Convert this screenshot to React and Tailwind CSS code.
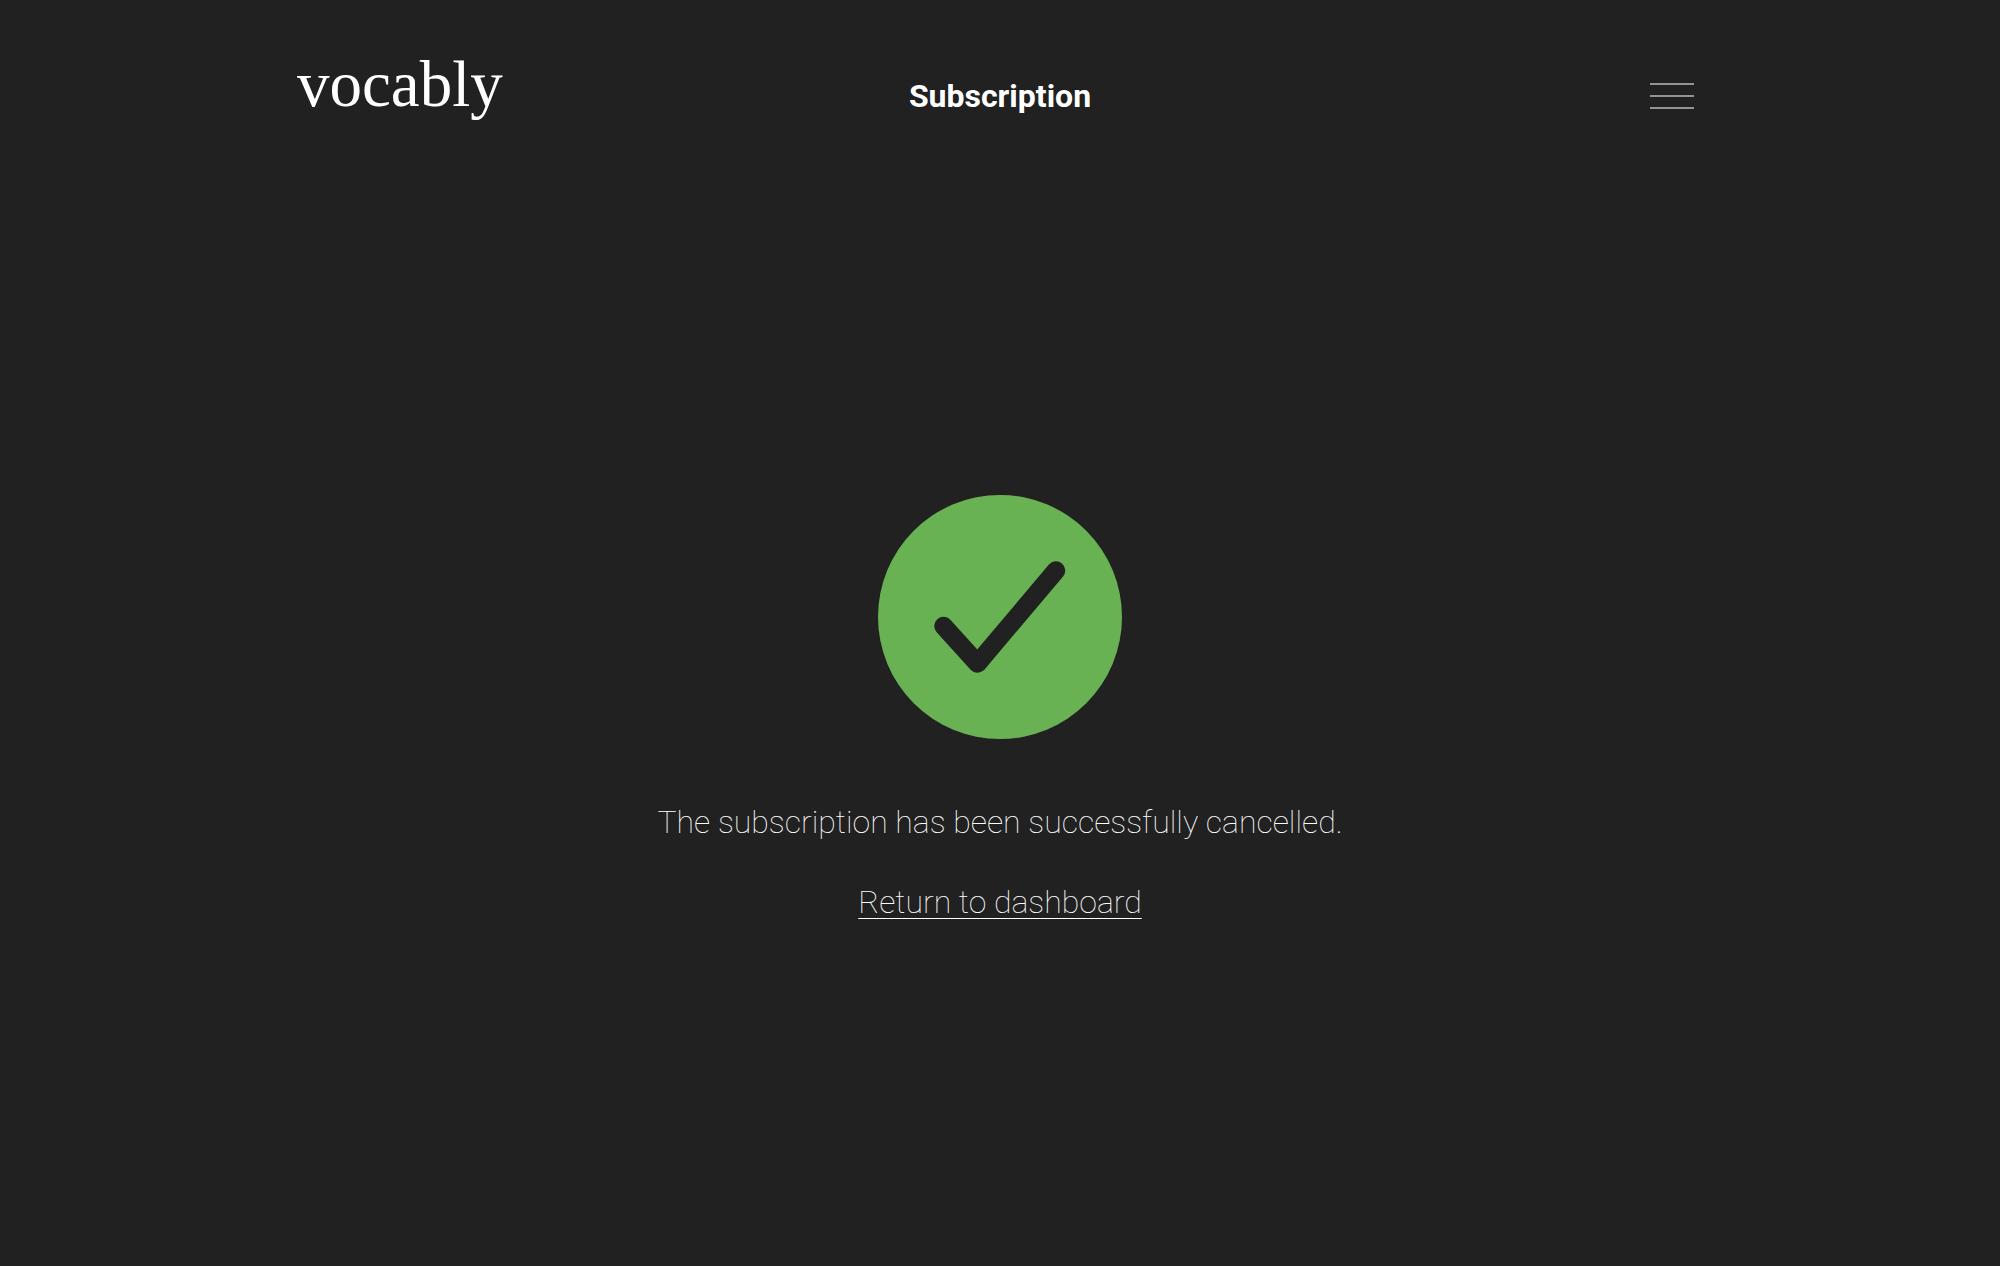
export default function App() {
  return (
    <div className="flex min-h-screen flex-col bg-[#212121] text-white font-['Roboto',sans-serif]">
      <header className="mx-auto grid w-full max-w-[1406px] grid-cols-3 items-start pt-12">
        <a href="#" className="font-['Liberation_Serif',serif] text-[65px] leading-18">vocably</a>
        <h1 className="text-center text-[32px] leading-24 font-bold">Subscription</h1>
        <button type="button" aria-label="Menu" className="mr-2 self-center justify-self-end">
          <svg width="46" height="28" viewBox="0 0 46 28" fill="none" stroke="#939393" strokeWidth="2">
            <path d="M1 2h44M1 14h44M1 26h44" />
          </svg>
        </button>
      </header>
      <main className="flex grow flex-col items-center justify-center pt-[10px] text-[32px] leading-12 font-thin">
        <svg width="246" height="246" viewBox="0 0 246 246" fill="none">
          <circle cx="123" cy="123" r="122" fill="#69b253" />
          <path d="M66.5 132L100.5 169.5L179 76.5" stroke="#212121" strokeWidth="18.5" strokeLinecap="round" strokeLinejoin="round" />
        </svg>
        <p className="mt-[58px]">The subscription has been successfully cancelled.</p>
        <a href="#" className="mt-8 underline decoration-1 underline-offset-5">Return to dashboard</a>
      </main>
    </div>
  );
}
